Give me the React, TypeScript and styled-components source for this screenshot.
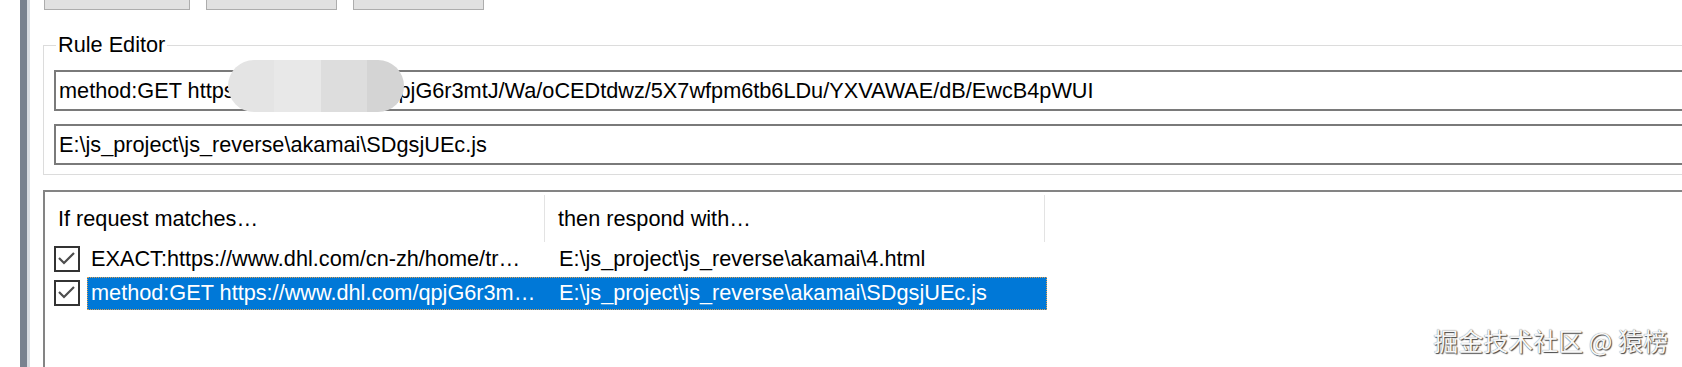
import styled, { createGlobalStyle } from "styled-components";

const GlobalStyle = createGlobalStyle`
  html, body {
    margin: 0;
    padding: 0;
    background: #fff;
  }
  body {
    font-family: "Liberation Sans", Arial, sans-serif;
  }
`;

const Window = styled.div`
  position: relative;
  width: 1682px;
  height: 367px;
  overflow: hidden;
  display: flex;
  background: #fff;
  color: #000;
  font-size: 21.7px;
`;

const Rail = styled.div`
  flex: none;
  width: 30px;
  display: flex;
  justify-content: flex-end;
`;

const RailBar = styled.div`
  width: 7px;
  background: #78828f;
  border-right: 3px solid #d8dde2;
`;

const Main = styled.div`
  flex: none;
  width: 1700px;
  padding-left: 13px;
  display: flex;
  flex-direction: column;
`;

const ButtonBar = styled.div`
  display: flex;
  gap: 16px;
  height: 10px;
  padding-left: 1px;
`;

const ToolButton = styled.div<{ $w: number }>`
  box-sizing: border-box;
  width: ${(p) => p.$w}px;
  height: 10px;
  background: #e1e1e1;
  border: 1px solid #adadad;
  border-top: none;
`;

const Group = styled.fieldset`
  margin: 23px 0 0 0;
  padding: 0 0 9px 10px;
  border: 1px solid #dcdcdc;
  min-width: 0;
`;

const Legend = styled.legend`
  margin-left: 2px;
  padding: 0 2px;
  line-height: 24px;
`;

const Fields = styled.div`
  display: flex;
  flex-direction: column;
  gap: 13px;
  margin-top: 13px;
`;

const TextBox = styled.div`
  position: relative;
  box-sizing: border-box;
  height: 41px;
  border: 2px solid #7a7a7a;
  padding: 0 3px;
  display: flex;
  align-items: center;
  white-space: nowrap;
`;

const Redaction = styled.div`
  position: absolute;
  left: 172px;
  top: -12px;
  width: 176px;
  height: 52px;
  border-radius: 26px;
  background: linear-gradient(
    90deg,
    #e4e4e4 0 26%,
    #e8e8e8 26% 53%,
    #dddddd 53% 79%,
    #d4d4d4 79% 100%
  );
`;

const ListBox = styled.div`
  flex: 1;
  margin-top: 15px;
  border-top: 2px solid #848484;
  border-left: 2px solid #848484;
`;

const HeaderRow = styled.div`
  display: flex;
  height: 50px;
`;

const HeaderCell = styled.div`
  box-sizing: border-box;
  width: 500px;
  height: 47px;
  margin-top: 3px;
  padding-left: 13px;
  display: flex;
  align-items: center;
  border-right: 1px solid #e3e3e3;
  white-space: nowrap;
`;

const Row = styled.div`
  display: flex;
  align-items: center;
  height: 34px;
  padding-left: 9px;
`;

const CheckBox = styled.div`
  box-sizing: border-box;
  flex: none;
  width: 26px;
  height: 26px;
  border: 2px solid #333;
  background: #fff;
  display: flex;
  align-items: center;
  justify-content: center;
`;

const RowBody = styled.div<{ $selected?: boolean }>`
  display: flex;
  align-items: center;
  height: 33px;
  margin-left: 7px;
  box-sizing: border-box;
  border: 1px ${(p) => (p.$selected ? "dotted #e0a050" : "solid transparent")};
  background: ${(p) => (p.$selected ? "#0078d7" : "transparent")};
  color: ${(p) => (p.$selected ? "#fff" : "#000")};
  white-space: nowrap;
`;

const MatchCell = styled.div`
  width: 458px;
  padding-left: 3px;
  box-sizing: border-box;
  overflow: hidden;
`;

const ResponseCell = styled.div`
  width: 500px;
  padding-left: 13px;
  box-sizing: border-box;
  overflow: hidden;
`;

const Watermark = styled.div`
  position: absolute;
  right: 14px;
  bottom: 13px;
  font-family: "Noto Sans CJK SC", "Liberation Sans", sans-serif;
  font-size: 25px;
  line-height: 28px;
  color: #f7f7f7;
  text-shadow: 1px 1px 1px #444, 0 0 1px #666;
  white-space: nowrap;
`;

function Check() {
  return (
    <svg width="22" height="22" viewBox="0 0 22 22">
      <polyline
        points="3,10 8,15 18,5"
        fill="none"
        stroke="#4d4d4d"
        strokeWidth="2.2"
      />
    </svg>
  );
}

const rules = [
  {
    match: "EXACT:https://www.dhl.com/cn-zh/home/tr…",
    response: "E:\\js_project\\js_reverse\\akamai\\4.html",
    selected: false,
  },
  {
    match: "method:GET https://www.dhl.com/qpjG6r3m…",
    response: "E:\\js_project\\js_reverse\\akamai\\SDgsjUEc.js",
    selected: true,
  },
];

export default function App() {
  return (
    <>
      <GlobalStyle />
      <Window>
        <Rail>
          <RailBar />
        </Rail>
        <Main>
          <ButtonBar>
            <ToolButton $w={146} />
            <ToolButton $w={131} />
            <ToolButton $w={131} />
          </ButtonBar>
          <Group>
            <Legend>Rule Editor</Legend>
            <Fields>
              <TextBox>
                method:GET https://www.dhl.com/qpjG6r3mtJ/Wa/oCEDtdwz/5X7wfpm6tb6LDu/YXVAWAE/dB/EwcB4pWUI
                <Redaction />
              </TextBox>
              <TextBox>E:\js_project\js_reverse\akamai\SDgsjUEc.js</TextBox>
            </Fields>
          </Group>
          <ListBox>
            <HeaderRow>
              <HeaderCell>If request matches…</HeaderCell>
              <HeaderCell>then respond with…</HeaderCell>
            </HeaderRow>
            {rules.map((r) => (
              <Row key={r.match}>
                <CheckBox>
                  <Check />
                </CheckBox>
                <RowBody $selected={r.selected}>
                  <MatchCell>{r.match}</MatchCell>
                  <ResponseCell>{r.response}</ResponseCell>
                </RowBody>
              </Row>
            ))}
          </ListBox>
        </Main>
        <Watermark>掘金技术社区 @ 猿榜</Watermark>
      </Window>
    </>
  );
}
